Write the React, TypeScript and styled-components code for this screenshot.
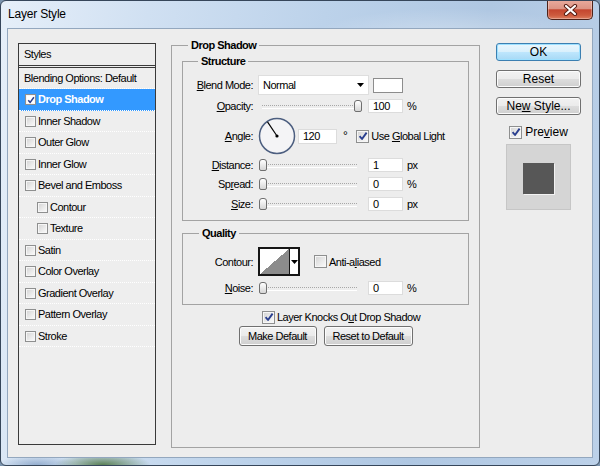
import { FC, ReactNode } from 'react';
import styled, { createGlobalStyle } from 'styled-components';

const GlobalStyle = createGlobalStyle`
  html, body {
    margin: 0;
    padding: 0;
    background: #7a93ad;
  }
  body {
    font-family: "Liberation Sans", Arial, sans-serif;
    font-size: 11px;
    color: #000;
  }
  * {
    box-sizing: border-box;
  }
`;

const Window = styled.div`
  width: 600px;
  height: 466px;
  display: flex;
  flex-direction: column;
  padding: 0 6px 7px;
  border: 1px solid #36465a;
  border-radius: 6px;
  overflow: hidden;
  background:
    radial-gradient(ellipse 48px 12px at 17% 100%, rgba(70, 112, 58, 0.85), transparent),
    radial-gradient(ellipse 40px 10px at 6% 100%, rgba(120, 150, 190, 0.7), transparent),
    radial-gradient(ellipse 140px 30px at 75% 8%, rgba(255, 255, 255, 0.35), transparent),
    radial-gradient(ellipse 120px 20px at 45% 70%, rgba(150, 175, 205, 0.5), transparent),
    linear-gradient(100deg, #e6eff9 0%, #d0e0f2 22%, #bcd2ea 48%, #afc7e2 72%, #bcd1e9 100%);
`;

const TitleBar = styled.div`
  height: 27px;
  flex-shrink: 0;
  display: flex;
  align-items: flex-start;
`;

const Title = styled.div`
  margin: 6px 0 0 1px;
  font-size: 12px;
  line-height: 15px;
  letter-spacing: -0.2px;
`;

const CloseButton = styled.div`
  margin: -1px 0 0 auto;
  width: 46px;
  height: 20px;
  border: 1px solid #4d2218;
  border-top: none;
  border-radius: 0 0 5px 5px;
  background: linear-gradient(#e9ab9d 0%, #dc9484 45%, #c4462f 52%, #cd5a3d 80%, #dc7e60 100%);
  box-shadow: inset 0 0 0 1px rgba(255, 255, 255, 0.3);
  display: flex;
  align-items: center;
  justify-content: center;
`;

const Client = styled.div`
  flex: 1;
  display: flex;
  align-items: flex-start;
  padding: 9px 0 0 10px;
  background: #ededed;
  border: 1px solid #93a7be;
`;

/* ---------- left list ---------- */

const StylesPanel = styled.div`
  width: 138px;
  height: 402px;
  margin-top: 5px;
  flex-shrink: 0;
  border: 1px solid #3a3a3a;
  background: #eeeeee;
`;

const PanelHeader = styled.div`
  height: 24px;
  padding: 4px 0 0 5px;
  line-height: 13px;
  letter-spacing: -0.5px;
  border-bottom: 3px double #3a3a3a;
`;

const StyleRow = styled.div<{ $indent?: boolean; $selected?: boolean; $plain?: boolean }>`
  height: 22px;
  display: flex;
  align-items: center;
  gap: 2px;
  padding-left: ${({ $indent, $plain }) => ($plain ? 5 : $indent ? 18 : 6)}px;
  border-bottom: 1px dotted #ffffff;
  background: ${({ $selected }) => ($selected ? '#3399ff' : 'transparent')};
  color: ${({ $selected }) => ($selected ? '#fff' : '#000')};
  font-weight: ${({ $selected }) => ($selected ? 'bold' : 'normal')};
  letter-spacing: -0.5px;
  line-height: 13px;

  &:nth-child(even) {
    height: 21px;
  }
`;

/* ---------- common controls ---------- */

const Key = styled.span`
  text-decoration: underline;
`;

const Box = styled.span<{ $size: number; $white?: boolean }>`
  display: inline-flex;
  align-items: center;
  justify-content: center;
  flex-shrink: 0;
  width: ${({ $size }) => $size}px;
  height: ${({ $size }) => $size}px;
  border: 1px solid #8e8f8f;
  background: ${({ $white }) =>
    $white ? '#ffffff' : 'linear-gradient(135deg, #d2d2d2 0%, #ececec 60%, #fbfbfb 100%)'};
  box-shadow: inset 0 0 0 1px #f6f6f6;
`;

const CheckBox: FC<{ size?: number; checked?: boolean; white?: boolean }> = ({ size = 13, checked, white }) => (
  <Box $size={size} $white={white}>
    {checked && (
      <svg width={size - 3} height={size - 3} viewBox="0 0 10 10">
        <path d="M1.6 5.2 L4 8 L8.6 1.6" fill="none" stroke="#2a3f8f" strokeWidth="1.9" strokeLinejoin="round" />
      </svg>
    )}
  </Box>
);

const Group = styled.fieldset<{ $w?: number; $h?: number; $mt?: number; $pb?: number }>`
  margin: ${({ $mt }) => $mt ?? 0}px 0 0;
  padding: 0 0 ${({ $pb }) => $pb ?? 0}px;
  min-width: 0;
  width: ${({ $w }) => ($w ? `${$w}px` : 'auto')};
  height: ${({ $h }) => ($h ? `${$h}px` : 'auto')};
  border: 1px solid #a3a3a3;
`;

const Legend = styled.legend<{ $ml: number }>`
  margin-left: ${({ $ml }) => $ml}px;
  padding: 0 3px;
  font-weight: bold;
  font-size: 11px;
  line-height: 14px;
  letter-spacing: -0.5px;
`;

const Row = styled.div<{ $h: number; $mt: number; $ml?: number }>`
  display: flex;
  align-items: center;
  height: ${({ $h }) => $h}px;
  margin-top: ${({ $mt }) => $mt}px;
  margin-left: ${({ $ml }) => $ml ?? 0}px;
  letter-spacing: -0.5px;
  white-space: nowrap;
`;

const Label = styled.span`
  width: 70px;
  flex-shrink: 0;
  margin-right: 5px;
  text-align: right;
`;

const TextField = styled.div<{ $w?: number; $h?: number; $ml?: number }>`
  width: ${({ $w }) => $w ?? 35}px;
  height: ${({ $h }) => $h ?? 14}px;
  margin-left: ${({ $ml }) => $ml ?? 0}px;
  flex-shrink: 0;
  padding-left: 4px;
  background: #fff;
  border: 1px solid #dcdcdc;
  line-height: ${({ $h }) => ($h ?? 14) - 2}px;
  font-size: 11px;
`;

const Unit = styled.span`
  margin-left: 4px;
`;

const SliderTrack = styled.div`
  position: relative;
  width: 100px;
  height: 14px;
  margin-right: 10px;
  flex-shrink: 0;

  &::before {
    content: '';
    position: absolute;
    left: 4px;
    right: 1px;
    top: 6px;
    height: 2px;
    border-top: 1px dotted #a8a8a8;
    border-bottom: 1px solid #ffffff;
  }
`;

const Thumb = styled.div`
  position: absolute;
  top: 1px;
  width: 8px;
  height: 12px;
  border: 1px solid #6f6f6f;
  border-radius: 3px 3px 2px 2px;
  background: linear-gradient(#ffffff, #d6d6d6);
`;

const Slider: FC<{ value: number }> = ({ value }) => (
  <SliderTrack>
    <Thumb style={{ left: 1 + value * 0.95 }} />
  </SliderTrack>
);

const SelectBox = styled.div`
  width: 111px;
  height: 20px;
  flex-shrink: 0;
  display: flex;
  align-items: center;
  justify-content: space-between;
  padding: 0 4px 0 4px;
  background: #fff;
  border: 1px solid #dedede;
`;

const Swatch = styled.div`
  width: 30px;
  height: 15px;
  margin-left: 4px;
  background: #fff;
  border: 1px solid #8d8d8d;
`;

const Degree = styled.span`
  margin: 0 9px 0 6px;
  font-size: 12px;
`;

const CheckLabel = styled.span<{ $gap?: number }>`
  margin-left: ${({ $gap }) => $gap ?? 2}px;
`;

const ContourPicker = styled.div`
  display: flex;
  width: 42px;
  height: 29px;
  flex-shrink: 0;
  margin-right: 14px;
  border: 2px solid #161616;
  background: #fff;
`;

const ContourCurve = styled.div`
  flex: 1;
  background: linear-gradient(to bottom right, #ffffff 50%, #8c8c8c 50%);
`;

const ContourArrow = styled.div`
  width: 9px;
  display: flex;
  align-items: center;
  justify-content: center;
  border-left: 1px solid #161616;
  background: #fff;
`;

const DownArrow: FC = () => (
  <svg width="7" height="4" viewBox="0 0 7 4">
    <path d="M0 0 H7 L3.5 4 Z" fill="#000" />
  </svg>
);

/* ---------- buttons ---------- */

const Button = styled.div<{ $w: number; $h?: number; $primary?: boolean; $small?: boolean }>`
  width: ${({ $w }) => $w}px;
  height: ${({ $h }) => $h ?? 18}px;
  flex-shrink: 0;
  display: flex;
  align-items: center;
  justify-content: center;
  white-space: pre;
  border-radius: 3px;
  font-size: ${({ $small }) => ($small ? 11 : 12)}px;
  letter-spacing: ${({ $small }) => ($small ? -0.5 : 0)}px;
  border: 1px solid ${({ $primary }) => ($primary ? '#3c7fb1' : '#707070')};
  background: ${({ $primary }) =>
    $primary
      ? 'linear-gradient(#eaf6fd 0%, #d9f0fc 50%, #bee6fd 51%, #a7d9f5 100%)'
      : 'linear-gradient(#f2f2f2 0%, #ebebeb 50%, #dddddd 51%, #cfcfcf 100%)'};
  box-shadow: inset 0 0 0 1px ${({ $primary }) => ($primary ? '#9de0ff' : '#fcfcfc')};
`;

const ButtonRow = styled.div`
  display: flex;
  justify-content: center;
  gap: 7px;
  margin-top: 2px;
`;

/* ---------- middle ---------- */

const MainGroup = styled(Group)`
  margin-left: 15px;
  flex-shrink: 0;
`;

const GroupBody = styled.div`
  padding: 0 10px;
`;

/* ---------- right column ---------- */

const SideColumn = styled.div`
  width: 85px;
  margin: 5px 0 0 16px;
  display: flex;
  flex-direction: column;
  align-items: center;
  gap: 9px;
`;

const PreviewToggle = styled.div`
  display: flex;
  align-items: center;
  gap: 3px;
  margin-top: 1px;
  font-size: 12px;
`;

const PreviewBox = styled.div`
  width: 65px;
  height: 66px;
  margin-top: -4px;
  display: flex;
  align-items: center;
  justify-content: center;
  background: #d5d5d5;
  border: 1px solid #c6c6c6;
`;

const PreviewSquare = styled.div`
  width: 31px;
  height: 31px;
  margin-top: 2px;
  background: #575757;
  box-shadow: 1px 1px 0 #f2f2f2;
`;

const Dial: FC<{ angle: number }> = ({ angle }) => {
  const r = (angle * Math.PI) / 180;
  const x = 19 + Math.cos(r) * 17;
  const y = 19 - Math.sin(r) * 17;
  return (
    <svg width="38" height="38" viewBox="0 0 38 38" style={{ flexShrink: 0 }}>
      <circle cx="19" cy="19" r="17.5" fill="#f4f4f6" stroke="#4d5f80" strokeWidth="1.5" />
      <line x1="19" y1="19" x2={x} y2={y} stroke="#000" strokeWidth="1.2" />
      <circle cx="19" cy="19" r="1.6" fill="#000" />
    </svg>
  );
};

interface StyleItem {
  name: string;
  indent?: boolean;
  checked?: boolean;
  selected?: boolean;
}

const styleItems: StyleItem[] = [
  { name: 'Drop Shadow', checked: true, selected: true },
  { name: 'Inner Shadow' },
  { name: 'Outer Glow' },
  { name: 'Inner Glow' },
  { name: 'Bevel and Emboss' },
  { name: 'Contour', indent: true },
  { name: 'Texture', indent: true },
  { name: 'Satin' },
  { name: 'Color Overlay' },
  { name: 'Gradient Overlay' },
  { name: 'Pattern Overlay' },
  { name: 'Stroke' },
];

const SliderRow: FC<{ label: ReactNode; value: number; text: string; unit: string; mt: number }> = ({
  label,
  value,
  text,
  unit,
  mt,
}) => (
  <Row $h={14} $mt={mt}>
    <Label>{label}</Label>
    <Slider value={value} />
    <TextField>{text}</TextField>
    <Unit>{unit}</Unit>
  </Row>
);

const App: FC = () => {
  return (
    <>
      <GlobalStyle />
      <Window>
        <TitleBar>
          <Title>Layer Style</Title>
          <CloseButton>
            <svg width="15" height="12" viewBox="0 0 15 12">
              <path d="M3 2 L12 10 M12 2 L3 10" stroke="#5a1f14" strokeWidth="4.2" strokeLinecap="round" />
              <path d="M3 2 L12 10 M12 2 L3 10" stroke="#ffffff" strokeWidth="2.2" strokeLinecap="round" />
            </svg>
          </CloseButton>
        </TitleBar>
        <Client>
          <StylesPanel>
            <PanelHeader>Styles</PanelHeader>
            <StyleRow $plain>Blending Options: Default</StyleRow>
            {styleItems.map((item) => (
              <StyleRow key={item.name} $indent={item.indent} $selected={item.selected}>
                <CheckBox size={11} checked={item.checked} white={item.selected} />
                <span>{item.name}</span>
              </StyleRow>
            ))}
          </StylesPanel>

          <MainGroup $w={309} $h={410}>
            <Legend $ml={16}>Drop Shadow</Legend>
            <GroupBody>
              <Group $mt={2} $pb={9}>
                <Legend $ml={15}>Structure</Legend>
                <Row $h={20} $mt={7}>
                  <Label>
                    <Key>B</Key>lend Mode:
                  </Label>
                  <SelectBox>
                    <span>Normal</span>
                    <DownArrow />
                  </SelectBox>
                  <Swatch />
                </Row>
                <SliderRow label={<><Key>O</Key>pacity:</>} value={100} text="100" unit="%" mt={4} />
                <Row $h={38} $mt={4}>
                  <Label>
                    <Key>A</Key>ngle:
                  </Label>
                  <Dial angle={124} />
                  <TextField $w={39} $h={15} $ml={2}>
                    120
                  </TextField>
                  <Degree>°</Degree>
                  <CheckBox checked />
                  <CheckLabel>
                    Use <Key>G</Key>lobal Light
                  </CheckLabel>
                </Row>
                <SliderRow label={<><Key>D</Key>istance:</>} value={0} text="1" unit="px" mt={3} />
                <SliderRow label={<>Sp<Key>r</Key>ead:</>} value={0} text="0" unit="%" mt={5} />
                <SliderRow label={<><Key>S</Key>ize:</>} value={0} text="0" unit="px" mt={6} />
              </Group>

              <Group $mt={5} $pb={9}>
                <Legend $ml={16}>Quality</Legend>
                <Row $h={29} $mt={7}>
                  <Label>Contour:</Label>
                  <ContourPicker>
                    <ContourCurve />
                    <ContourArrow>
                      <DownArrow />
                    </ContourArrow>
                  </ContourPicker>
                  <CheckBox />
                  <CheckLabel>
                    Anti-a<Key>l</Key>iased
                  </CheckLabel>
                </Row>
                <SliderRow label={<><Key>N</Key>oise:</>} value={0} text="0" unit="%" mt={5} />
              </Group>

              <Row $h={14} $mt={5} $ml={80}>
                <CheckBox checked />
                <CheckLabel>
                  Layer Knocks O<Key>u</Key>t Drop Shadow
                </CheckLabel>
              </Row>
              <ButtonRow>
                <Button $w={78} $h={20} $small>
                  Make Default
                </Button>
                <Button $w={89} $h={20} $small>
                  Reset to Default
                </Button>
              </ButtonRow>
            </GroupBody>
          </MainGroup>

          <SideColumn>
            <Button $w={85} $primary>
              OK
            </Button>
            <Button $w={85}>Reset</Button>
            <Button $w={85}>
              <span>
                Ne<Key>w</Key> Style...
              </span>
            </Button>
            <PreviewToggle>
              <CheckBox checked />
              <span>
                Pre<Key>v</Key>iew
              </span>
            </PreviewToggle>
            <PreviewBox>
              <PreviewSquare />
            </PreviewBox>
          </SideColumn>
        </Client>
      </Window>
    </>
  );
};

export default App;
